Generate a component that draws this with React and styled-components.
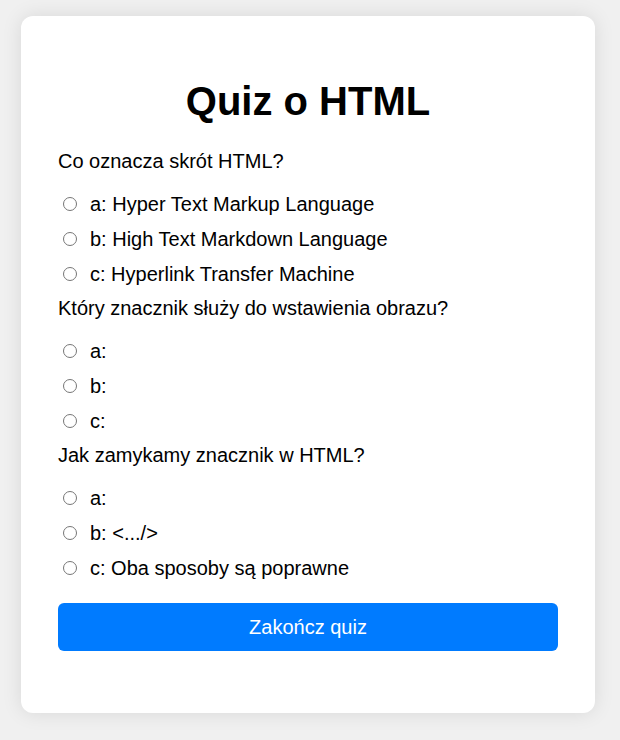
import React from "react";
import styled, { createGlobalStyle } from "styled-components";

const Global = createGlobalStyle`
  html, body { margin: 0; padding: 0; }
  body {
    background: #f0f0f0;
    font-family: "Liberation Sans", Arial, sans-serif;
    color: #000;
  }
`;

const Page = styled.div`
  padding: 16px 25px 28px 21px;
`;

const Card = styled.div`
  width: 574px;
  box-sizing: border-box;
  background: #fff;
  border-radius: 12px;
  box-shadow: 0 0 20px rgba(0, 0, 0, 0.1);
  padding: 37px;
`;

const Title = styled.h1`
  margin: 25px 0 26px;
  font-size: 40px;
  line-height: 46px;
  font-weight: bold;
  text-align: center;
`;

const Question = styled.div`
  display: flex;
  flex-direction: column;
  margin-bottom: 11px;
`;

const QuestionText = styled.p`
  margin: 0 0 20px;
  font-size: 20px;
  line-height: 23px;
`;

const Options = styled.div`
  display: flex;
  flex-direction: column;
  gap: 12px;
`;

const Option = styled.label`
  display: flex;
  align-items: flex-start;
  font-size: 20px;
  line-height: 23px;
  cursor: pointer;
`;

const Radio = styled.input`
  width: 14px;
  height: 14px;
  margin: 4px 13px 0 5px;
  flex: none;
`;

const Submit = styled.button`
  display: block;
  width: 100%;
  height: 48px;
  margin: 23px 0 25px;
  border: none;
  border-radius: 6px;
  background: #007bff;
  color: #fff;
  font-family: "Liberation Sans", Arial, sans-serif;
  font-size: 20px;
  cursor: pointer;
`;

const questions = [
  {
    q: "Co oznacza skrót HTML?",
    options: [
      "a: Hyper Text Markup Language",
      "b: High Text Markdown Language",
      "c: Hyperlink Transfer Machine",
    ],
  },
  {
    q: "Który znacznik służy do wstawienia obrazu?",
    options: ["a:", "b:", "c:"],
  },
  {
    q: "Jak zamykamy znacznik w HTML?",
    options: ["a:", "b: <.../>", "c: Oba sposoby są poprawne"],
  },
];

export default function App() {
  return (
    <>
      <Global />
      <Page>
        <Card>
          <Title>Quiz o HTML</Title>
          {questions.map((item, i) => (
            <Question key={i}>
              <QuestionText>{item.q}</QuestionText>
              <Options>
                {item.options.map((o, j) => (
                  <Option key={j}>
                    <Radio type="radio" name={`q${i}`} />
                    <span>{o}</span>
                  </Option>
                ))}
              </Options>
            </Question>
          ))}
          <Submit>Zakończ quiz</Submit>
        </Card>
      </Page>
    </>
  );
}
